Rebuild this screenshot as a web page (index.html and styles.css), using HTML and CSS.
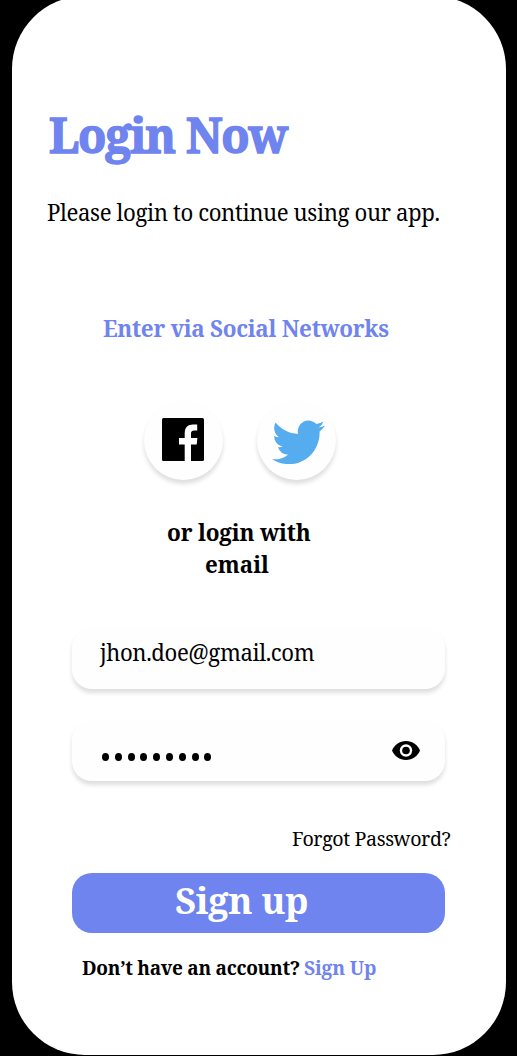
FILE: index.html
```html
<!DOCTYPE html>
<html lang="en">
<head>
<meta charset="utf-8">
<title>Login</title>
<link rel="stylesheet" href="styles.css">
</head>
<body>
<main class="phone">
  <h1 class="title"><span class="t t-title">Login Now</span></h1>
  <p class="subtitle"><span class="t t-subtitle">Please login to continue using our app.</span></p>
  <h2 class="social-title"><span class="t t-social">Enter via Social Networks</span></h2>
  <div class="socials">
    <button class="round facebook" aria-label="Facebook">
      <svg width="42" height="43" viewBox="0 0 42 43"><rect width="42" height="43" rx="1.500" fill="#000"/><path d="M22.700 43V26.500H17V20h5.700V15.500C22.700 9.500 25.700 6.500 31 6.500h4.200v6H32.500c-2.600 0-3.500 1-3.500 3.300V20h6.400l-.7 6.500H29V43z" fill="#fff"/></svg>
    </button>
    <button class="round twitter" aria-label="Twitter">
      <svg width="53" height="44" viewBox="0 0 24 19.700" preserveAspectRatio="none"><path d="M23.953 2.570a10 10 0 0 1-2.825.775 4.958 4.958 0 0 0 2.163-2.723c-.951.555-2.005.959-3.127 1.184a4.920 4.920 0 0 0-8.384 4.482C7.690 6.095 4.067 4.130 1.640 1.162a4.822 4.822 0 0 0-.666 2.475c0 1.710.870 3.213 2.188 4.096a4.904 4.904 0 0 1-2.228-.616v.060a4.923 4.923 0 0 0 3.946 4.827 4.996 4.996 0 0 1-2.212.085 4.936 4.936 0 0 0 4.604 3.417 9.867 9.867 0 0 1-6.102 2.105c-.390 0-.779-.023-1.170-.067a13.995 13.995 0 0 0 7.557 2.209c9.053 0 13.998-7.496 13.998-13.985 0-.210 0-.420-.015-.630A9.935 9.935 0 0 0 24 2.590z" fill="#55acee"/></svg>
    </button>
  </div>
  <p class="or"><span class="t t-or">or login with</span><span class="t t-email">email</span></p>
  <div class="field"><span class="t t-address">jhon.doe@gmail.com</span></div>
  <div class="field password">
    <div class="dots"><i></i><i></i><i></i><i></i><i></i><i></i><i></i><i></i><i></i></div>
    <svg class="eye" width="28" height="19" viewBox="0 0 28 19"><path d="M14 0C7.600 0 2.200 3.900 0 9.500 2.200 15.100 7.600 19 14 19s11.800-3.900 14-9.500C25.800 3.900 20.400 0 14 0z"/><circle cx="14" cy="9.500" r="6.200" fill="#fff"/><circle cx="14" cy="9.500" r="3.800"/></svg>
  </div>
  <p class="forgot"><span class="t t-forgot">Forgot Password?</span></p>
  <button class="submit"><span class="t t-submit">Sign up</span></button>
  <div class="account"><span class="account-text"><span class="t t-account">Don’t have an account?</span></span><span class="t t-link">Sign Up</span></div>
</main>
</body>
</html>
```
FILE: styles.css
```css
* { box-sizing: border-box; }
body { margin: 0; height: 1056px; overflow: hidden; background: #000; color: #000;
  font-family: "Noto Serif", "Droid Serif", "DejaVu Serif Condensed", serif; }
h1, h2, p { margin: 0; }
button { border: 0; padding: 0; font-family: inherit; }
.phone { display: flex; flex-direction: column; width: 494px; height: 1059px;
  margin: -4px 0 0 12px; padding-top: 108px; border-radius: 73px; background: #fff; }

/* Condensed lettering, scaled from the left edge */
.t { display: block; width: max-content; white-space: nowrap; transform-origin: 0 50%; }
.t-title { letter-spacing: -1.2px; transform: scaleX(.954); -webkit-text-stroke: 1.5px #6f84ee; }
.t-subtitle { letter-spacing: -.4px; transform: scaleX(.964); }
.t-social { letter-spacing: -.3px; transform: scaleX(.976); }
.t-or { letter-spacing: -.2px; transform: scaleX(.98); }
.t-address { letter-spacing: -.4px; transform: scaleX(.962); }
.t-forgot { letter-spacing: -.4px; transform: scaleX(.957); }
.t-submit { letter-spacing: -.4px; transform: scaleX(.985); }
.t-account { letter-spacing: -.3px; transform: scaleX(.977); }
.t-link { letter-spacing: -.2px; transform: scaleX(.99); }

.title { height: 60px; padding-left: 37px; font-size: 48.5px; line-height: 60px; color: #6f84ee; }
.subtitle { height: 32px; margin-top: 32px; padding-left: 35px; font-size: 23px; line-height: 32px; }
.social-title { height: 32px; margin-top: 84px; padding-left: 91px; font-size: 23px; line-height: 32px; color: #6f84ee; }
.socials { display: flex; gap: 34px; margin-top: 57px; padding-left: 132px; }
.round { display: grid; place-items: center; width: 79px; height: 79px; border-radius: 50%;
  background: #fefefe; box-shadow: 0 4px 4px rgba(0,0,0,.13); }
.facebook { padding: 0 1px 3px 0; }
.twitter { padding: 2px 0 0 4px; }
.or { height: 64px; margin-top: 36px; padding-left: 154.5px; font-size: 23px; line-height: 32px; font-weight: 700; }
.t-email { margin-left: 38.5px; transform: scaleX(.97); }
.field { display: flex; align-items: center; width: 373px; height: 61px; margin: 48px 0 0 60px;
  padding: 0 25px 14px 28px; border-radius: 20px; background: #fefefe;
  box-shadow: 0 4px 4px rgba(0,0,0,.13); font-size: 23px; line-height: 32px; }
.password { justify-content: space-between; margin-top: 31px; padding: 0 25px 0 30px; }
.dots { display: flex; gap: 5.8px; padding-top: 12px; }
.dots i { width: 7px; height: 8px; border-radius: 50%; background: #000; }
.forgot { height: 30px; margin-top: 42px; padding-left: 280px; font-size: 20.5px; line-height: 30px; }
.submit { width: 373px; height: 60px; margin: 20px 0 0 60px; padding: 0 0 7px 103px;
  border-radius: 20px; background: #6f84ee; color: #fff; font-size: 37px; line-height: 53px; font-weight: 700; }
.account { display: flex; height: 30px; margin-top: 20px; padding-left: 70px; font-size: 19.5px; line-height: 30px; font-weight: 700; }
.account-text { width: 222px; }
.t-link { color: #6f84ee; }
```
